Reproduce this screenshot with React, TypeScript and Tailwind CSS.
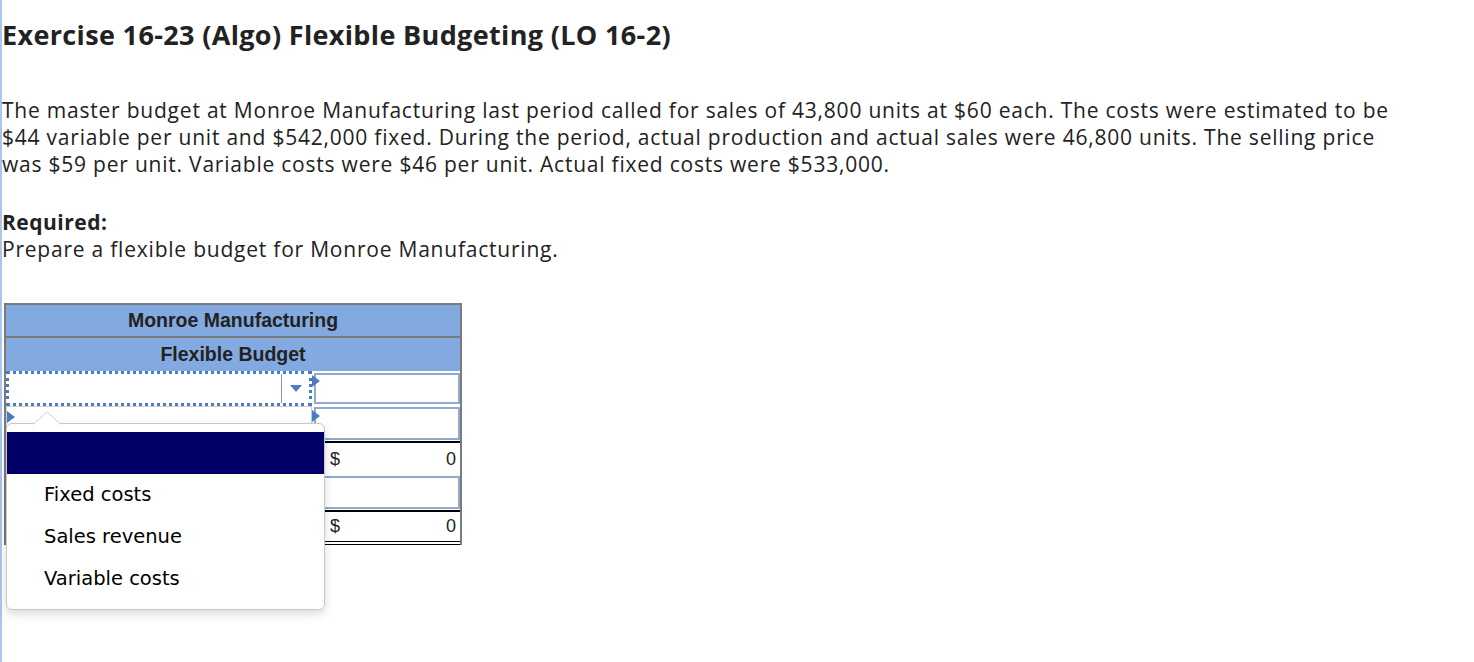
import React from "react";

const Tri = () => (
  <svg width="8" height="12" viewBox="0 0 8 12" className="absolute left-0 top-[4px]">
    <path d="M0 0 L8 6 L0 12 Z" fill="#4a7cc4" />
  </svg>
);

export default function App() {
  return (
    <div className="relative min-h-[662px] bg-white border-l-2 border-[#a9c5f0]" style={{ fontFamily: "'Open Sans', Lato, sans-serif" }}>
      <div className="pt-[18px] text-[#222]">
        <h1 className="text-[27px] font-bold leading-[34px] tracking-[0.35px] text-[#222]">
          Exercise 16-23 (Algo) Flexible Budgeting (LO 16-2)
        </h1>
        <p className="mt-[45px] text-[21px] leading-[27px] tracking-[0.78px] text-[#222] w-[1410px]">
          The master budget at Monroe Manufacturing last period called for sales of 43,800 units at $60 each. The costs were estimated to be $44 variable per unit and $542,000 fixed. During the period, actual production and actual sales were 46,800 units. The selling price was $59 per unit. Variable costs were $46 per unit. Actual fixed costs were $533,000.
        </p>
        <p className="mt-[31px] text-[21px] leading-[27px] tracking-[0.5px] font-bold">Required:</p>
        <p className="text-[21px] leading-[27px] tracking-[0.78px]">Prepare a flexible budget for Monroe Manufacturing.</p>
      </div>

      <div className="relative ml-[2px] mt-[40px] w-[458px]" style={{ fontFamily: "'Liberation Sans', Arial, sans-serif" }}>
        <div className="border-2 border-b-0 border-[#7a7a7a] bg-[#83aae0] text-[#222]">
          <div className="h-[33px] flex items-center justify-center text-[19.5px] font-bold border-b-2 border-[#7a7a7a]">Monroe Manufacturing</div>
          <div className="h-[33px] flex items-center justify-center text-[19.5px] font-bold">Flexible Budget</div>
        </div>
        <div className="border-l-2 border-r-2 border-[#7a7a7a] w-[458px]">
          {/* row 3 */}
          <div className="flex h-[35px]">
            <div className="w-[306px] h-[35px] border-[3px] border-dotted border-[#4a7cc4] flex justify-end bg-white">
              <div className="w-[28px] h-full border-l border-[#7d97c0] flex items-center justify-center">
                <svg width="12" height="7" viewBox="0 0 12 7"><path d="M0 0 L12 0 L6 7 Z" fill="#4a7cc4" /></svg>
              </div>
            </div>
            <div className="relative flex-1 pl-[2px] py-[2px]">
              <Tri />
              <div className="h-full border-2 border-[#8faad3] bg-white" />
            </div>
          </div>
          {/* row 4 */}
          <div className="flex h-[35px]">
            <div className="relative w-[306px] border border-[#ccc] bg-white">
              <Tri />
            </div>
            <div className="relative flex-1 pl-[2px] py-[1px]">
              <Tri />
              <div className="h-full border-2 border-[#8faad3] bg-white" />
            </div>
          </div>
          {/* row 5 */}
          <div className="flex h-[34px]">
            <div className="w-[306px]" />
            <div className="flex-1 border-t-2 border-black flex items-center justify-between pl-[18px] pr-[4px] text-[18px] text-[#222]">
              <span>$</span><span>0</span>
            </div>
          </div>
          {/* row 6 */}
          <div className="flex h-[35px]">
            <div className="w-[306px]" />
            <div className="flex-1 py-[1px]">
              <div className="h-full border-2 border-[#8faad3] bg-white" />
            </div>
          </div>
          {/* row 7 */}
          <div className="flex h-[35px]">
            <div className="w-[306px]" />
            <div className="flex-1 border-t-2 border-black border-b-[4px] border-double flex items-center justify-between pl-[18px] pr-[4px] text-[18px] text-[#222]">
              <span>$</span><span>0</span>
            </div>
          </div>
        </div>

        {/* dropdown menu */}
        <div className="absolute left-[2px] top-[120px] w-[319px] h-[187px] bg-white border border-[#c8c8c8] rounded-[6px] shadow-[0_4px_10px_rgba(0,0,0,0.15)] pt-[8px]" style={{ fontFamily: "'DejaVu Sans', Verdana, sans-serif" }}>
          <svg width="28" height="14" viewBox="0 0 28 14" className="absolute left-[26px] top-[-13px]">
            <path d="M0 13.5 L14 1 L28 13.5" fill="white" stroke="#d0d0d0" strokeWidth="1" />
            <rect x="1" y="13" width="26" height="2" fill="white" />
          </svg>
          <div className="h-[42px] bg-[#000066]" />
          <div className="h-[42px] flex items-center pl-[37px] text-[19.5px] text-black">Fixed costs</div>
          <div className="h-[42px] flex items-center pl-[37px] text-[19.5px] text-black">Sales revenue</div>
          <div className="h-[42px] flex items-center pl-[37px] text-[19.5px] text-black">Variable costs</div>
        </div>
      </div>
    </div>
  );
}
